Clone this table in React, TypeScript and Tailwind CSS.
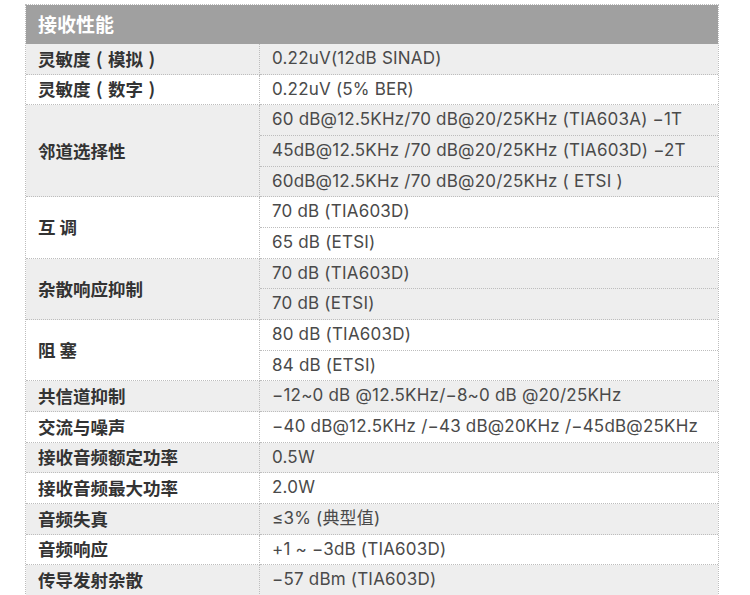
const groups: { label: string; values: string[] }[] = [
  { label: '灵敏度(模拟)', values: ['0.22uV(12dB SINAD)'] },
  { label: '灵敏度(数字)', values: ['0.22uV (5% BER)'] },
  {
    label: '邻道选择性',
    values: [
      '60 dB@12.5KHz/70 dB@20/25KHz (TIA603A) −1T',
      '45dB@12.5KHz /70 dB@20/25KHz (TIA603D) −2T',
      '60dB@12.5KHz /70 dB@20/25KHz ( ETSI )',
    ],
  },
  { label: '互 调', values: ['70 dB (TIA603D)', '65 dB (ETSI)'] },
  { label: '杂散响应抑制', values: ['70 dB (TIA603D)', '70 dB (ETSI)'] },
  { label: '阻 塞', values: ['80 dB (TIA603D)', '84 dB (ETSI)'] },
  { label: '共信道抑制', values: ['−12~0 dB @12.5KHz/−8~0 dB @20/25KHz'] },
  { label: '交流与噪声', values: ['−40 dB@12.5KHz /−43 dB@20KHz /−45dB@25KHz'] },
  { label: '接收音频额定功率', values: ['0.5W'] },
  { label: '接收音频最大功率', values: ['2.0W'] },
  { label: '音频失真', values: ['≤3% (典型值)'] },
  { label: '音频响应', values: ['+1 ~ −3dB (TIA603D)'] },
  { label: '传导发射杂散', values: ['−57 dBm (TIA603D)'] },
]

// parens in the labels sit centred in a full-width cell
function Label({ text }: { text: string }) {
  return (
    <>
      {text.split(/([()])/).map((part, i) =>
        part === '(' || part === ')' ? (
          <span key={i} className="inline-block w-[1em] text-center">
            {part}
          </span>
        ) : (
          <span key={i}>{part}</span>
        ),
      )}
    </>
  )
}

export default function App() {
  return (
    <div className="w-[750px] h-[595px] overflow-hidden bg-white pt-[4px] pl-[25px] font-['Noto_Sans_CJK_SC',sans-serif]">
      <div className="w-[694px] border-t border-l border-r border-dotted border-[#bdbdbd]">
        <div className="h-[39px] bg-[#a0a0a0] flex items-center pl-3 text-white font-bold text-[19px]">
          接收性能
        </div>
        {groups.map((g, i) => (
          <div key={i} className={`flex ${i % 2 === 0 ? 'bg-[#eeeeee]' : 'bg-white'}`}>
            <div className="w-[234px] shrink-0 flex items-center pl-3 border-r border-b border-dotted border-[#bdbdbd] text-[17.5px] font-bold text-[#333]">
              <Label text={g.label} />
            </div>
            <div className="flex-1 flex flex-col">
              {g.values.map((v, j) => (
                <div
                  key={j}
                  className="h-[30.67px] flex items-center pl-3 border-b border-dotted border-[#bdbdbd] text-[17px] tracking-[0.2px] text-[#4a4a4a] font-['Inter','Noto_Sans_CJK_SC',sans-serif]"
                >
                  {v}
                </div>
              ))}
            </div>
          </div>
        ))}
      </div>
    </div>
  )
}
